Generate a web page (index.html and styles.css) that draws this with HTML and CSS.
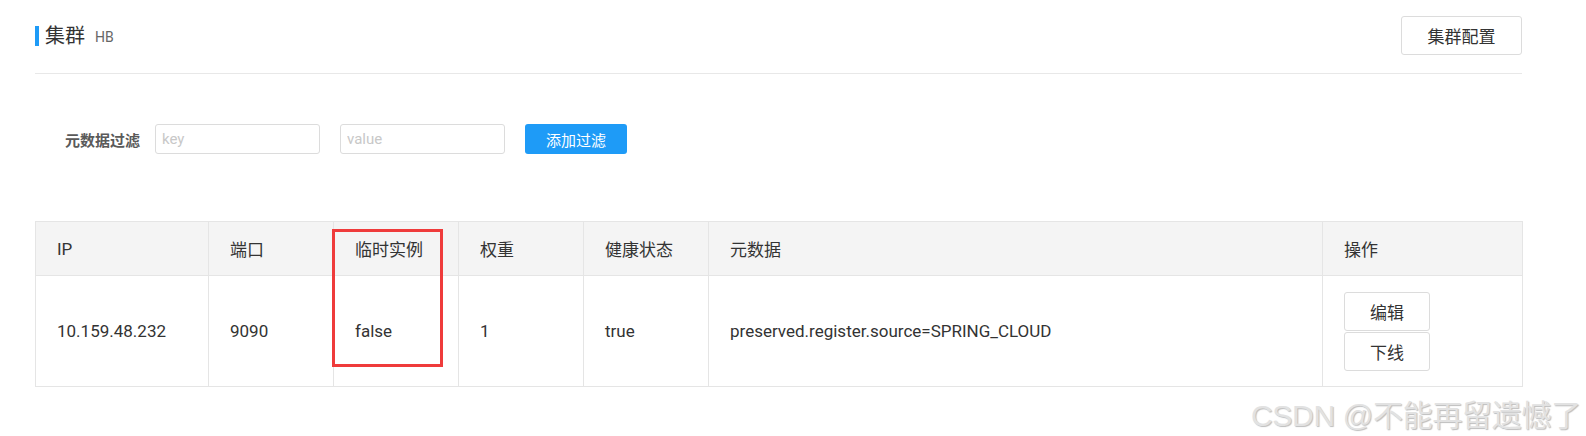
FILE: index.html
```html
<!DOCTYPE html>
<html lang="zh-CN">
<head>
    <meta charset="UTF-8">
    <title>集群 HB</title>
    <link rel="stylesheet" href="styles.css">
</head>
<body>
    <div class="page">
        <div class="header">
            <div class="title">
                <span class="title-bar"></span>
                <span class="title-text">集群</span>
                <span class="title-sub">HB</span>
            </div>
            <button class="btn btn-large">集群配置</button>
        </div>

        <div class="filter">
            <span class="filter-label">元数据过滤</span>
            <input class="filter-input" type="text" placeholder="key">
            <input class="filter-input" type="text" placeholder="value">
            <button class="btn-primary">添加过滤</button>
        </div>

        <div class="table-wrap">
            <table class="table">
                <colgroup>
                    <col style="width: 173px">
                    <col style="width: 125px">
                    <col style="width: 125px">
                    <col style="width: 125px">
                    <col style="width: 125px">
                    <col style="width: 614px">
                    <col style="width: 200px">
                </colgroup>
                <thead>
                    <tr>
                        <th>IP</th>
                        <th>端口</th>
                        <th>临时实例</th>
                        <th>权重</th>
                        <th>健康状态</th>
                        <th>元数据</th>
                        <th>操作</th>
                    </tr>
                </thead>
                <tbody>
                    <tr>
                        <td>10.159.48.232</td>
                        <td>9090</td>
                        <td>false</td>
                        <td>1</td>
                        <td>true</td>
                        <td class="meta">preserved.register.source=SPRING_CLOUD</td>
                        <td>
                            <div class="actions">
                                <button class="btn btn-small">编辑</button>
                                <button class="btn btn-small">下线</button>
                            </div>
                        </td>
                    </tr>
                </tbody>
            </table>
            <!-- annotation box around the ephemeral column -->
            <div class="highlight"></div>
        </div>
    </div>

    <div class="watermark">CSDN @不能再留遗憾了</div>
</body>
</html>
```

FILE: styles.css
```css
body {
    margin: 0;
    background: #fff;
    color: #333;
    font-family: Roboto, "Noto Sans CJK SC", sans-serif;
}
.page {
    padding: 16px 64px 0 35px;
}
.header {
    display: flex;
    justify-content: space-between;
    align-items: center;
    padding-bottom: 18px;
    border-bottom: 1px solid #e8e8e8;
}
.title {
    display: flex;
    align-items: center;
}
.title-bar {
    width: 4px;
    height: 20px;
    background: #1e9bf7;
    margin-right: 6px;
}
.title-text {
    font-size: 20px;
    line-height: 24px;
    color: #333;
}
.title-sub {
    font-size: 14px;
    color: #666;
    margin-left: 10px;
    margin-top: 3px;
}
.btn {
    background: #fff;
    border: 1px solid #dcdcdc;
    border-radius: 3px;
    color: #333;
    font-family: Roboto, "Noto Sans CJK SC", sans-serif;
    cursor: pointer;
    padding: 0;
}
.btn-large {
    width: 121px;
    height: 39px;
    font-size: 17px;
}
.filter {
    display: flex;
    align-items: center;
    margin-top: 50px;
    padding-left: 30px;
}
.filter-label {
    font-size: 15px;
    font-weight: bold;
    color: #5a5a5a;
    margin-right: 15px;
}
.filter-input {
    width: 165px;
    height: 30px;
    box-sizing: border-box;
    border: 1px solid #dcdcdc;
    border-radius: 3px;
    padding: 0 6px;
    font-family: Roboto, sans-serif;
    font-size: 15px;
    color: #333;
    margin-right: 20px;
    outline: none;
}
.filter-input::placeholder {
    color: #c8c8c8;
}
.btn-primary {
    width: 102px;
    height: 30px;
    background: #1e9bf7;
    border: none;
    border-radius: 3px;
    color: #fff;
    font-family: Roboto, "Noto Sans CJK SC", sans-serif;
    font-size: 15px;
    padding: 0;
    cursor: pointer;
}
.table-wrap {
    position: relative;
    margin-top: 67px;
}
.table {
    width: 1487px;
    border-collapse: collapse;
    table-layout: fixed;
    font-size: 17px;
}
.table th,
.table td {
    border: 1px solid #e5e5e5;
    text-align: left;
    padding: 0 0 0 21px;
}
.table th {
    height: 53px;
    background: #f4f4f4;
    font-weight: normal;
    font-size: 17px;
}
.table td {
    height: 110px;
}
.actions {
    display: flex;
    flex-direction: column;
    gap: 1px;
}
.btn-small {
    width: 86px;
    height: 39px;
    font-size: 17px;
}
.highlight {
    position: absolute;
    left: 297px;
    top: 8px;
    width: 105px;
    height: 132px;
    border: 3px solid #ef3b3b;
}
.watermark {
    position: absolute;
    left: 1251px;
    top: 391px;
    font-family: "Liberation Sans", "Noto Sans CJK SC", sans-serif;
    font-size: 30px;
    letter-spacing: -0.3px;
    color: #e2e2e2;
    text-shadow: 1px 1px 1px #bdbdbd;
    white-space: nowrap;
}
```
